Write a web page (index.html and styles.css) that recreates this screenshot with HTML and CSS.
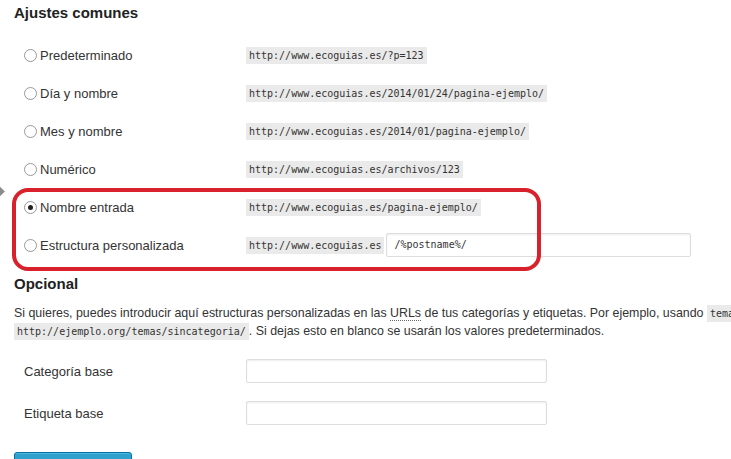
FILE: index.html
```html
<!DOCTYPE html>
<html lang="es">
<head>
<meta charset="utf-8">
<title>Ajustes de enlaces permanentes</title>
<link rel="stylesheet" href="styles.css">
</head>
<body>
<div class="menu-arrow"></div>
<div class="page">
  <h3 class="section-title">Ajustes comunes</h3>
  <div class="common">
    <div class="highlight"></div>
    <div class="opt-row">
      <label class="opt-label"><span class="radio"></span>Predeterminado</label>
      <div class="opt-value"><code class="code">http://www.ecoguias.es/?p=123</code></div>
    </div>
    <div class="opt-row">
      <label class="opt-label"><span class="radio"></span>Día y nombre</label>
      <div class="opt-value"><code class="code">http://www.ecoguias.es/2014/01/24/pagina-ejemplo/</code></div>
    </div>
    <div class="opt-row">
      <label class="opt-label"><span class="radio"></span>Mes y nombre</label>
      <div class="opt-value"><code class="code">http://www.ecoguias.es/2014/01/pagina-ejemplo/</code></div>
    </div>
    <div class="opt-row">
      <label class="opt-label"><span class="radio"></span>Numérico</label>
      <div class="opt-value"><code class="code">http://www.ecoguias.es/archivos/123</code></div>
    </div>
    <div class="opt-row">
      <label class="opt-label"><span class="radio checked"></span>Nombre entrada</label>
      <div class="opt-value"><code class="code">http://www.ecoguias.es/pagina-ejemplo/</code></div>
    </div>
    <div class="opt-row">
      <label class="opt-label"><span class="radio"></span>Estructura personalizada</label>
      <div class="opt-value"><code class="code">http://www.ecoguias.es</code><span class="text-input mono">/%postname%/</span></div>
    </div>
  </div>

  <h3 class="section-title opcional">Opcional</h3>
  <p class="desc"><span class="line1">Si quieres, puedes introducir aquí estructuras personalizadas en las <abbr class="abbr">URLs</abbr> de tus categorías y etiquetas. Por ejemplo, usando <code class="code">temas</code> como base para tu categoría harás que los enlaces a las categorías sean del tipo</span><br><code class="code">http://ejemplo.org/temas/sincategoria/</code>. Si dejas esto en blanco se usarán los valores predeterminados.</p>

  <div class="base-table">
    <div class="base-row">
      <div class="base-label">Categoría base</div>
      <div class="text-input base-input"></div>
    </div>
    <div class="base-row">
      <div class="base-label">Etiqueta base</div>
      <div class="text-input base-input"></div>
    </div>
  </div>

  <div class="actions"><button class="button-primary">Guardar cambios</button></div>
</div>
</body>
</html>
```
FILE: styles.css
```css
html, body {
  margin: 0;
  padding: 0;
  background: #fff;
  overflow: hidden;
}
body {
  font-family: "Liberation Sans", Arial, sans-serif;
  font-size: 13px;
  color: #333;
  position: relative;
  width: 731px;
  height: 459px;
}
.menu-arrow {
  position: absolute;
  left: -6px;
  top: 187px;
  width: 9px;
  height: 9px;
  background: #8a8a8a;
  transform: rotate(45deg);
}
.page {
  padding: 3px 0 0 14px;
}
.section-title {
  margin: 0;
  font-size: 15px;
  line-height: 20px;
  font-weight: bold;
  color: #222;
}
.common {
  position: relative;
  margin-top: 13px;
  width: 700px;
}
.highlight {
  position: absolute;
  left: -2px;
  top: 152px;
  width: 521px;
  height: 75px;
  border: 4px solid #d9212b;
  border-radius: 16px;
  pointer-events: none;
}
.opt-row {
  display: grid;
  grid-template-columns: 232px 1fr;
  height: 38px;
  align-items: center;
}
.opt-label {
  display: flex;
  align-items: center;
  padding-left: 10px;
  gap: 3px;
  color: #333;
}
.radio {
  width: 11px;
  height: 11px;
  border: 1px solid #999;
  border-radius: 50%;
  background: #fff;
  position: relative;
  flex: none;
}
.radio.checked::after {
  content: "";
  position: absolute;
  left: 3px;
  top: 3px;
  width: 5px;
  height: 5px;
  border-radius: 50%;
  background: #222;
}
.opt-value {
  display: flex;
  align-items: center;
  gap: 2px;
}
.code {
  font-family: "DejaVu Sans Mono", "Liberation Mono", monospace;
  font-size: 10px;
  line-height: 13px;
  background: #eaeaea;
  color: #333;
  padding: 2px 3px;
  display: inline-block;
}
.text-input {
  display: block;
  box-sizing: border-box;
  height: 24px;
  border: 1px solid #ddd;
  border-radius: 2px;
  background: #fff;
  box-shadow: inset 0 1px 2px rgba(0,0,0,0.07);
}
.mono {
  font-family: "DejaVu Sans Mono", "Liberation Mono", monospace;
  font-size: 10px;
  line-height: 22px;
  padding: 0 7px;
  width: 305px;
  color: #333;
}
.opcional {
  margin-top: 10px;
}
.desc {
  margin: 10px 0 0 0;
  line-height: 18px;
  font-size: 12.4px;
  color: #333;
}
.line1 {
  white-space: nowrap;
}
.abbr {
  text-decoration: none;
  border-bottom: 1px dotted #666;
}
.base-table {
  margin-top: 10px;
}
.base-row {
  display: grid;
  grid-template-columns: 232px 301px;
  height: 42px;
  align-items: center;
}
.base-label {
  padding-left: 10px;
  color: #333;
}
.base-input {
  height: 24px;
}
.actions {
  margin-top: 18px;
}
.button-primary {
  width: 118px;
  height: 28px;
  background: #2ea2cc;
  border: 1px solid #0074a2;
  border-radius: 3px;
  box-shadow: inset 0 1px 0 rgba(120,200,230,0.5);
  color: #fff;
  font-family: "Liberation Sans", Arial, sans-serif;
  font-size: 13px;
  padding: 0;
}
```
